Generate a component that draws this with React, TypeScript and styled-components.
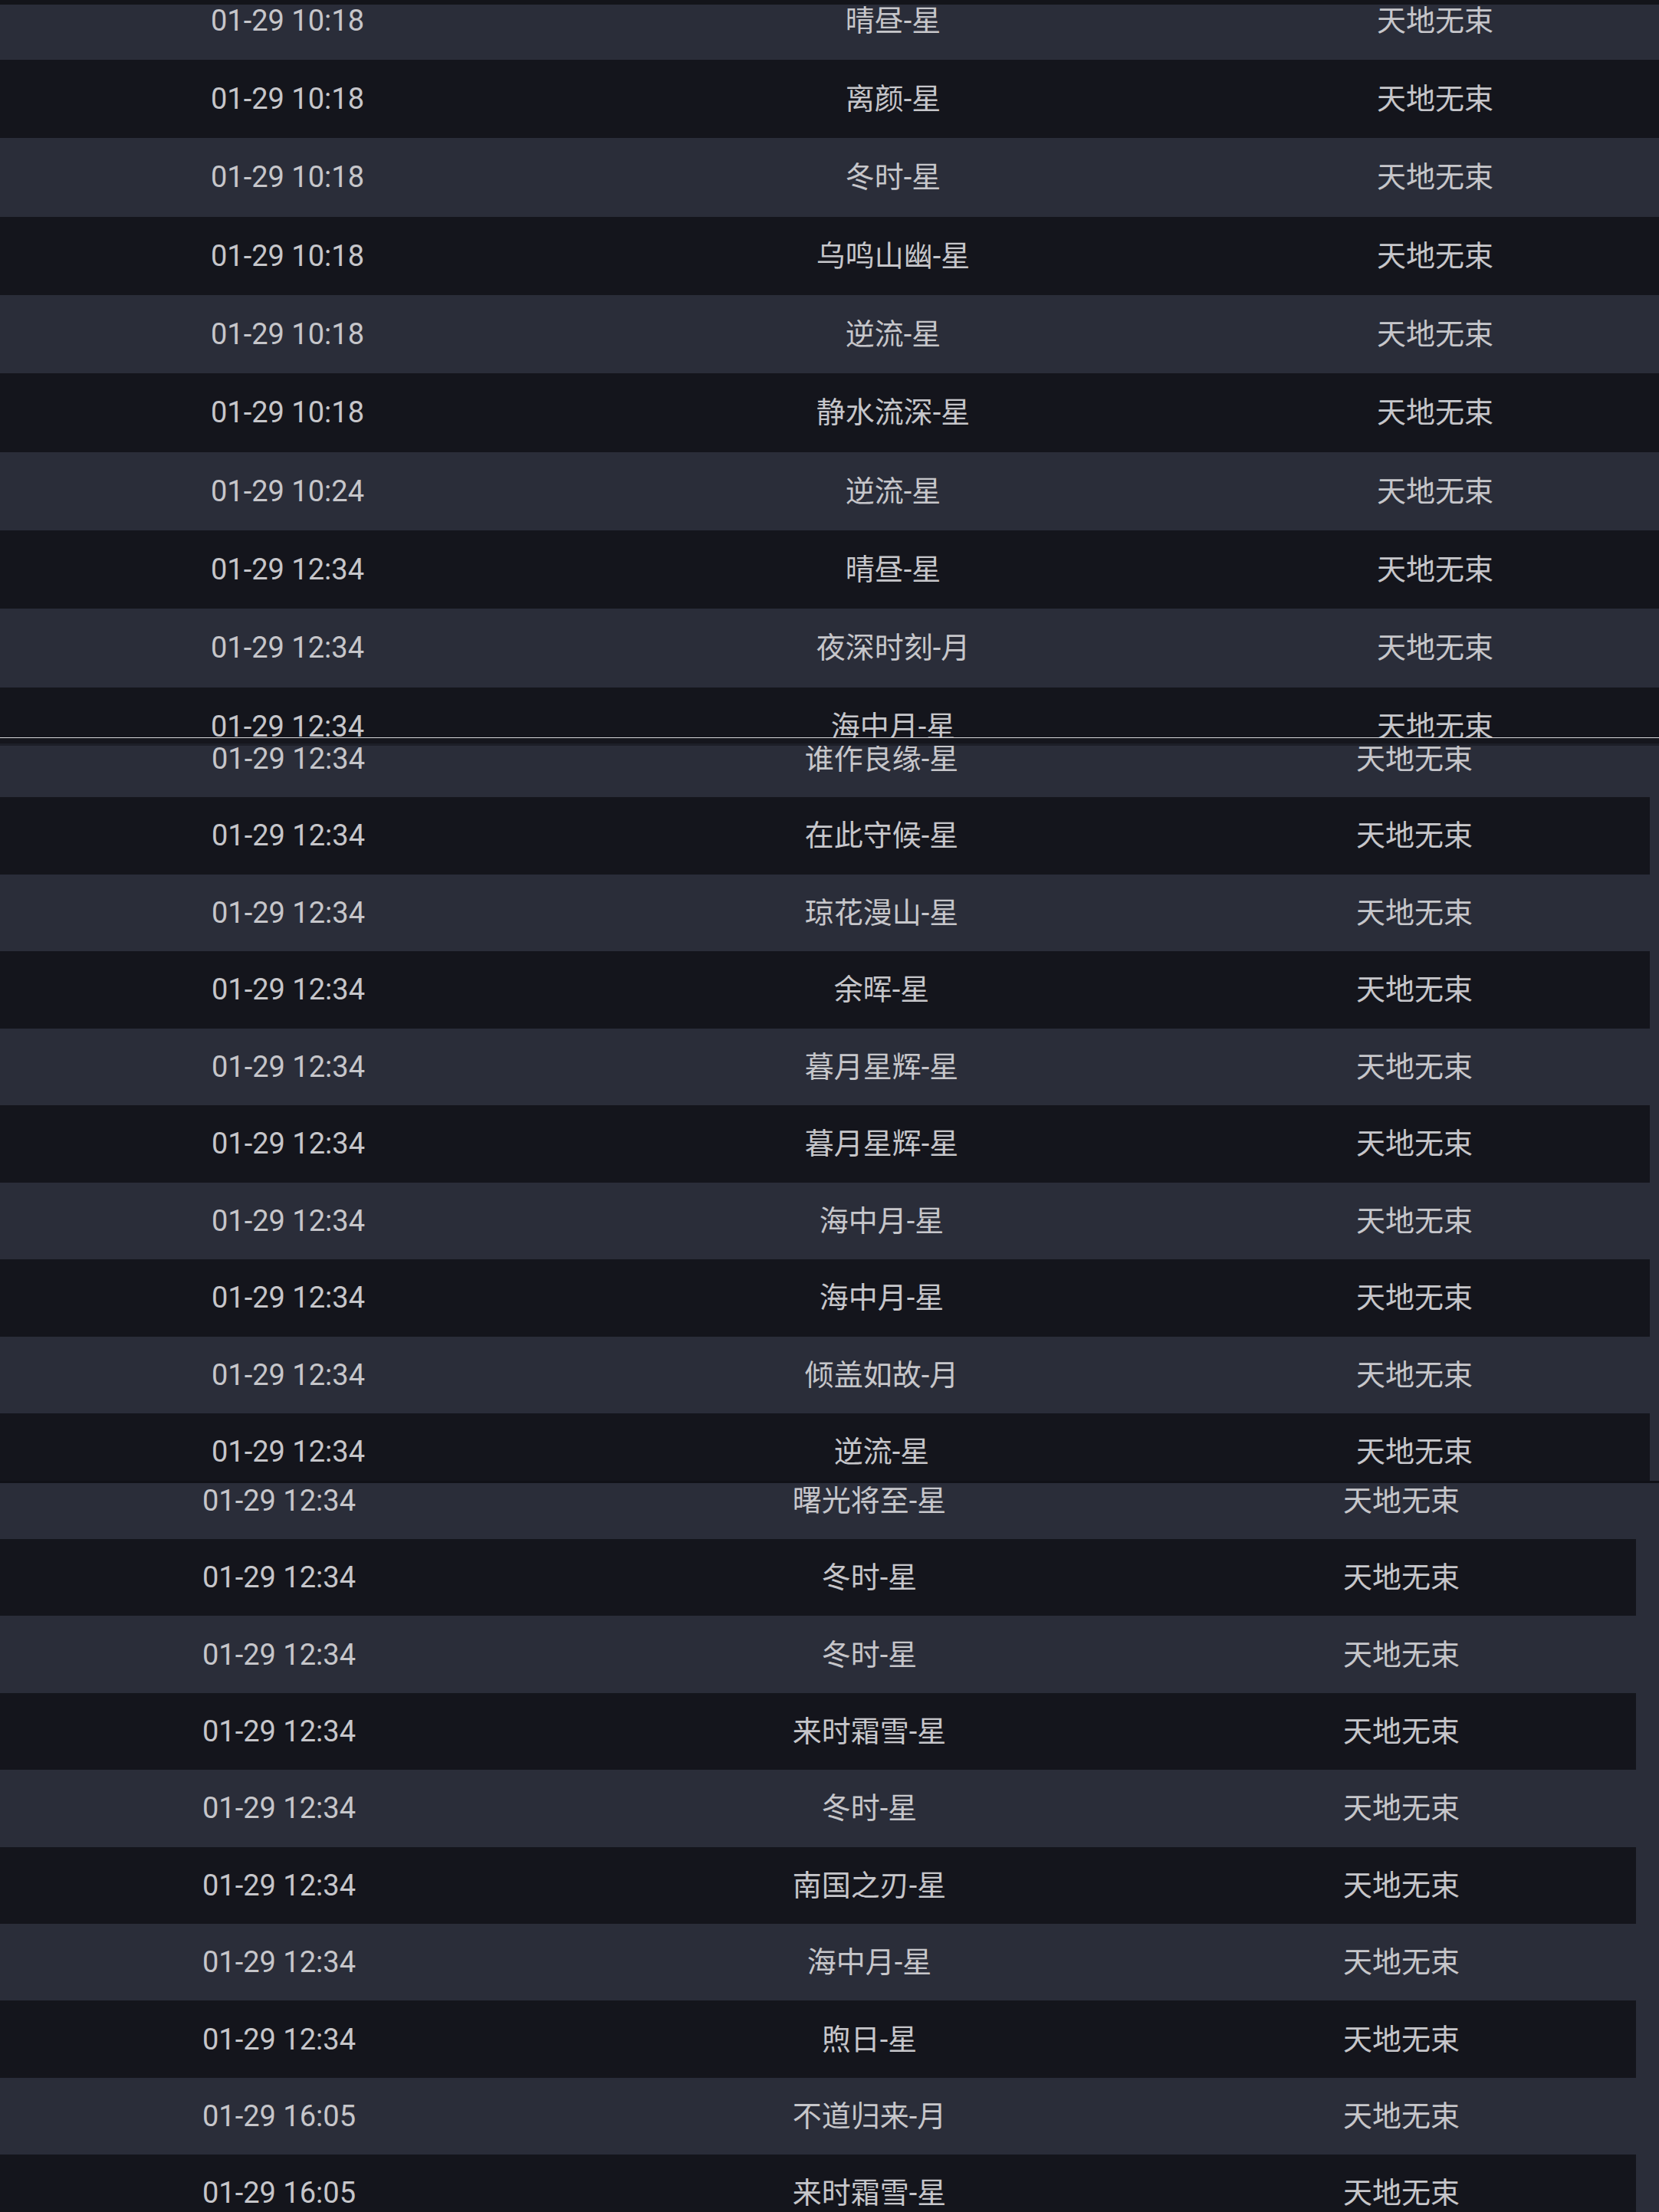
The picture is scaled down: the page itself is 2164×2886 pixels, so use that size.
import React from "react";
import styled, { createGlobalStyle } from "styled-components";

const Global = createGlobalStyle`
  html, body {
    margin: 0;
    padding: 0;
    background: #14151c;
  }
  body {
    width: 2164px;
    height: 2886px;
    overflow: hidden;
    font-family: Roboto, "Noto Sans CJK SC", sans-serif;
  }
`;

const LIGHT = "#2a2d39";
const DARK = "#14151c";

type Rec = { time: string; name: string; status: string };

type SectionSpec = {
  key: string;
  topStrip?: { h: number; color: string }[];
  viewH: number;
  offset: number;
  rowH: number;
  rowW: number;
  cols: string;
  bottomStrip?: { h: number; color: string }[];
  rows: Rec[];
};

const r = (time: string, name: string): Rec => ({ time, name, status: "天地无束" });

const sections: SectionSpec[] = [
  {
    key: "s1",
    topStrip: [{ h: 6, color: "#13141a" }],
    viewH: 956,
    offset: -30.33,
    rowH: 102.33,
    rowW: 2164,
    cols: "750px 830px 584px",
    bottomStrip: [{ h: 1, color: "#d6d6d8" }],
    rows: [
      r("01-29 10:18", "晴昼-星"),
      r("01-29 10:18", "离颜-星"),
      r("01-29 10:18", "冬时-星"),
      r("01-29 10:18", "乌鸣山幽-星"),
      r("01-29 10:18", "逆流-星"),
      r("01-29 10:18", "静水流深-星"),
      r("01-29 10:24", "逆流-星"),
      r("01-29 12:34", "晴昼-星"),
      r("01-29 12:34", "夜深时刻-月"),
      r("01-29 12:34", "海中月-星"),
    ],
  },
  {
    key: "s2",
    topStrip: [
      { h: 7, color: "#15161d" },
      { h: 3, color: "#1d1f28" },
    ],
    viewH: 959,
    offset: -33.5,
    rowH: 100.5,
    rowW: 2152,
    cols: "752px 796px 594px",
    bottomStrip: [{ h: 3, color: "#101117" }],
    rows: [
      r("01-29 12:34", "谁作良缘-星"),
      r("01-29 12:34", "在此守候-星"),
      r("01-29 12:34", "琼花漫山-星"),
      r("01-29 12:34", "余晖-星"),
      r("01-29 12:34", "暮月星辉-星"),
      r("01-29 12:34", "暮月星辉-星"),
      r("01-29 12:34", "海中月-星"),
      r("01-29 12:34", "海中月-星"),
      r("01-29 12:34", "倾盖如故-月"),
      r("01-29 12:34", "逆流-星"),
    ],
  },
  {
    key: "s3",
    viewH: 951,
    offset: -27.4,
    rowH: 100.4,
    rowW: 2134,
    cols: "728px 812px 576px",
    rows: [
      r("01-29 12:34", "曙光将至-星"),
      r("01-29 12:34", "冬时-星"),
      r("01-29 12:34", "冬时-星"),
      r("01-29 12:34", "来时霜雪-星"),
      r("01-29 12:34", "冬时-星"),
      r("01-29 12:34", "南国之刃-星"),
      r("01-29 12:34", "海中月-星"),
      r("01-29 12:34", "煦日-星"),
      r("01-29 16:05", "不道归来-月"),
      r("01-29 16:05", "来时霜雪-星"),
    ],
  },
];

const Page = styled.main`
  display: flex;
  flex-direction: column;
  width: 2164px;
  height: 2886px;
  overflow: hidden;
  background: ${DARK};
`;

const Section = styled.section`
  display: flex;
  flex-direction: column;
  flex: none;
`;

const Strip = styled.div<{ $h: number; $color: string }>`
  flex: none;
  height: ${(p) => p.$h}px;
  background: ${(p) => p.$color};
`;

const Viewport = styled.div<{ $h: number }>`
  flex: none;
  height: ${(p) => p.$h}px;
  overflow: hidden;
  background: ${LIGHT};
`;

const List = styled.div<{ $offset: number }>`
  display: flex;
  flex-direction: column;
  margin-top: ${(p) => p.$offset}px;
`;

const Row = styled.div<{ $dark: boolean; $h: number; $w: number; $cols: string }>`
  flex: none;
  display: grid;
  grid-template-columns: ${(p) => p.$cols};
  align-items: center;
  width: ${(p) => p.$w}px;
  height: ${(p) => p.$h}px;
  background: ${(p) => (p.$dark ? DARK : LIGHT)};
`;

const Cell = styled.div`
  text-align: center;
  font-size: 38px;
  line-height: 1;
  color: #c6c6ca;
  white-space: nowrap;
`;

export default function App() {
  return (
    <>
      <Global />
      <Page>
        {sections.map((s) => (
          <Section key={s.key}>
            {s.topStrip?.map((t, i) => (
              <Strip key={i} $h={t.h} $color={t.color} />
            ))}
            <Viewport $h={s.viewH}>
              <List $offset={s.offset}>
                {s.rows.map((row, i) => (
                  <Row key={i} $dark={i % 2 === 1} $h={s.rowH} $w={s.rowW} $cols={s.cols}>
                    <Cell>{row.time}</Cell>
                    <Cell>{row.name}</Cell>
                    <Cell>{row.status}</Cell>
                  </Row>
                ))}
              </List>
            </Viewport>
            {s.bottomStrip?.map((t, i) => (
              <Strip key={i} $h={t.h} $color={t.color} />
            ))}
          </Section>
        ))}
      </Page>
    </>
  );
}
